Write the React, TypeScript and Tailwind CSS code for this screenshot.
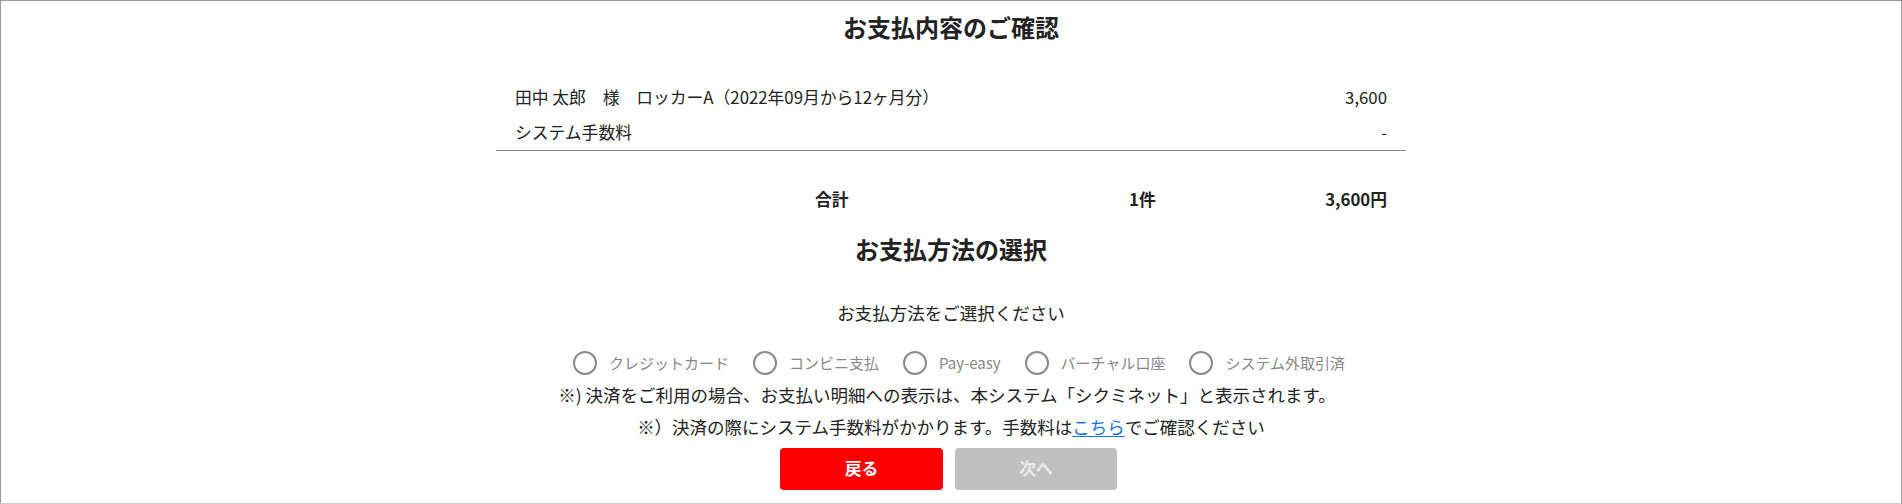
import { useState } from "react";

const methods = [
  "クレジットカード",
  "コンビニ支払",
  "Pay-easy",
  "バーチャル口座",
  "システム外取引済",
];

export default function App() {
  const [selected, setSelected] = useState<string | null>(null);

  return (
    <div
      className="h-[504px] w-full border border-[#9a9a9a] border-b-[#cfcfcf] bg-white text-[#222] overflow-hidden"
      style={{ fontFamily: '"Noto Sans CJK JP", "Noto Sans", sans-serif' }}
    >
      <h2 className="h-[52px] flex items-center justify-center text-[24px] font-bold">
        お支払内容のご確認
      </h2>

      <div className="mx-auto w-[910px] mt-[27px]">
        <div className="border-b border-[#8a8a8a]">
          <div className="h-[35px] px-[19px] flex items-center justify-between text-[16.8px]">
            <span>田中 太郎　様　ロッカーA（2022年09月から12ヶ月分）</span>
            <span>3,600</span>
          </div>
          <div className="h-[35px] px-[19px] flex items-center justify-between text-[16.8px]">
            <span>システム手数料</span>
            <span>-</span>
          </div>
        </div>

        <div className="mt-[31px] h-[35px] pl-[319px] pr-[19px] flex items-center text-[16.8px] font-bold">
          <span className="w-[314px]">合計</span>
          <span className="flex-1">1件</span>
          <span>3,600円</span>
        </div>
      </div>

      <h2 className="mt-[14px] h-[36px] flex items-center justify-center text-[24px] font-bold">
        お支払方法の選択
      </h2>

      <p className="mt-[32px] h-[28px] flex items-center justify-center text-[17.5px]">
        お支払方法をご選択ください
      </p>

      <div className="mt-[21px] h-[30px] flex items-center justify-center gap-[24px] pl-[16px]">
        {methods.map((m) => (
          <label
            key={m}
            className="flex items-center gap-[12px] text-[15px] text-[#888] cursor-pointer"
            onClick={() => setSelected(m)}
          >
            <span className="w-[24px] h-[24px] rounded-full border-2 border-[#8a8a8a] flex items-center justify-center">
              {selected === m && (
                <span className="w-[12px] h-[12px] rounded-full bg-[#8a8a8a]" />
              )}
            </span>
            <span>{m}</span>
          </label>
        ))}
      </div>

      <p className="mt-[2px] h-[30px] flex items-center justify-center text-[17.5px] text-[#222] pr-[8px]">
        ※) 決済をご利用の場合、お支払い明細への表示は、本システム「シクミネット」と表示されます。
      </p>
      <p className="mt-[2px] h-[30px] flex items-center justify-center text-[17.5px] text-[#222]">
        ※）決済の際にシステム手数料がかかります。手数料は
        <a href="#" className="text-[#1a73e8] underline underline-offset-2">
          こちら
        </a>
        でご確認ください
      </p>

      <div className="mt-[6px] flex justify-center gap-[12px] pr-[5px]">
        <button className="w-[163px] h-[42px] rounded-[4px] bg-[#ff0000] text-white text-[16.8px] font-bold">
          戻る
        </button>
        <button
          disabled
          className="w-[162px] h-[42px] rounded-[4px] bg-[#c0c0c0] text-[#ececec] text-[16.8px] font-bold"
        >
          次へ
        </button>
      </div>
    </div>
  );
}
